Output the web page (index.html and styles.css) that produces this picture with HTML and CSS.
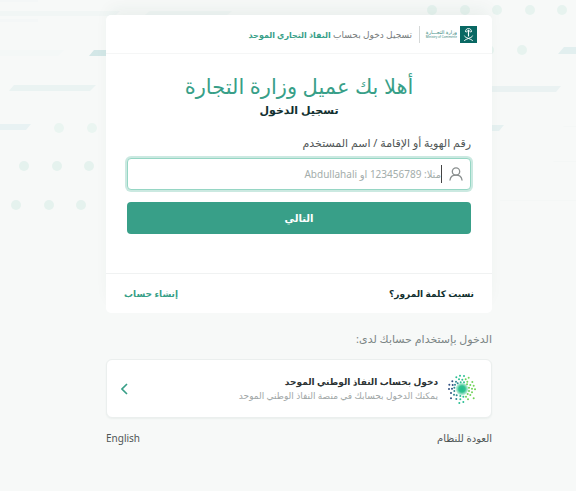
FILE: index.html
```html
<!DOCTYPE html>
<html lang="ar" dir="rtl">
<head>
    <meta charset="UTF-8">
    <meta name="viewport" content="width=device-width, initial-scale=1.0">
    <title>تسجيل الدخول</title>
    <link rel="stylesheet" href="styles.css">
</head>
<body>
    <svg class="pattern pattern-left" width="240" height="220" viewBox="0 0 240 220" aria-hidden="true">
        <path d="M0 11h120l-5 5H0z" fill="#f1f6f5"/>
        <path d="M150 11h82l-5 4h-82z" fill="#f1f6f5"/>
        <path d="M0 19h38v3H0zM0 0h38v2H0z" fill="#f4f7f7"/>
        <path d="M0 50h64l-6 6H0z" fill="#f4f8f7"/>
        <path d="M94 50h30v6H89z" fill="#d3e7e7"/>
        <path d="M14 85h82l-6 6H9z" fill="#eaf3f2"/>
        <path d="M0 124h31l-5 6H0z" fill="#e8f2f3"/>
        <g fill="#eaf5f1">
            <circle cx="59" cy="128" r="5"/>
            <circle cx="92" cy="128" r="5"/>
        </g>
        <g fill="#e5f2ee">
            <circle cx="24" cy="166" r="5"/>
            <circle cx="57" cy="166" r="5"/>
            <circle cx="89" cy="166" r="5"/>
            <circle cx="16" cy="205" r="5"/>
            <circle cx="49" cy="205" r="5"/>
            <circle cx="81" cy="205" r="5"/>
        </g>
    </svg>
    <svg class="pattern pattern-right" width="176" height="220" viewBox="0 0 176 220" aria-hidden="true">
        <g fill="#e7f3ef">
            <circle cx="32" cy="10" r="5"/>
            <circle cx="65" cy="10" r="5"/>
            <circle cx="97" cy="10" r="5"/>
            <circle cx="130" cy="10" r="5"/>
            <circle cx="162" cy="10" r="5"/>
            <circle cx="89" cy="50" r="5"/>
            <circle cx="122" cy="50" r="5"/>
        </g>
        <path d="M164 47h12v7h-18z" fill="#e2efef"/>
        <path d="M80 86h81l-5 6H80z" fill="#eaf2f2"/>
        <path d="M80 125h24l-5 6H80z" fill="#e6f1f1"/>
        <path d="M164 126h12v1h-13zM154 161h22v1h-23zM100 200h76v1h-76z" fill="#f4f7f6"/>
    </svg>

    <main class="page">
        <div class="card">
            <header class="card-header">
                <div class="brand">
                    <svg width="17" height="17" viewBox="0 0 34 34" aria-hidden="true">
                        <rect width="34" height="34" fill="#096863"/>
                        <g fill="none" stroke="#fff" stroke-linecap="round">
                            <path d="M17 8v12" stroke-width="2.4"/>
                            <path d="M11 11c0-4 3-6 6-6s6 2 6 6M13 12c1-4 7-4 8 0" stroke-width="2"/>
                            <path d="M9 20c1 4 12 5 16 9M25 20c-1 4-12 5-16 9" stroke-width="2"/>
                        </g>
                    </svg>
                    <div class="brand-text">
                        <span class="brand-ar">وزارة التجـــارة</span>
                        <span class="brand-en">Ministry of Commerce</span>
                    </div>
                </div>
                <p class="header-text">تسجيل دخول بحساب <b>النفاذ التجاري الموحد</b></p>
            </header>

            <form class="login">
                <h1>أهلا بك عميل وزارة التجارة</h1>
                <h2>تسجيل الدخول</h2>
                <label for="username">رقم الهوية أو الإقامة / اسم المستخدم</label>
                <div class="field">
                    <svg width="14" height="14" viewBox="0 0 14 14" fill="none" stroke="#8a8f8f" stroke-width="1.3" stroke-linecap="round" aria-hidden="true">
                        <circle cx="7" cy="4.5" r="3.7"/>
                        <path d="M1 13c.4-3 2.8-4.8 6-4.8s5.600 1.800 6 4.800"/>
                    </svg>
                    <span class="caret"></span>
                    <input type="text" id="username" placeholder="مثلا: 123456789 او Abdullahali">
                </div>
                <button type="submit" class="next">التالي</button>
            </form>

            <div class="card-footer">
                <a href="#" class="forgot">نسيت كلمة المرور؟</a>
                <a href="#" class="register">إنشاء حساب</a>
            </div>
        </div>

        <p class="other">الدخول بإستخدام حسابك لدى:</p>

        <a href="#" class="provider">
            <svg width="30" height="30" viewBox="0 0 90 90" aria-hidden="true">
                <defs>
                    <radialGradient id="core">
                        <stop offset="0" stop-color="#20bd8d"/>
                        <stop offset=".5" stop-color="#32c391"/>
                        <stop offset="1" stop-color="#5fd0a5" stop-opacity="0.3"/>
                    </radialGradient>
                </defs>
                <circle cx="45" cy="45" r="19" fill="url(#core)"/>
                <g fill="#2f4f80">
                    <circle cx="16" cy="22" r="3"/>
                    <circle cx="7" cy="32" r="3"/>
                    <circle cx="17" cy="33" r="3"/>
                    <circle cx="6" cy="45" r="3"/>
                    <circle cx="15" cy="44" r="3"/>
                    <circle cx="12" cy="57" r="3"/>
                    <circle cx="12" cy="73" r="3"/>
                </g>
                <g fill="#2f8a91">
                    <circle cx="27" cy="23" r="3"/>
                    <circle cx="24" cy="32" r="3"/>
                    <circle cx="22" cy="41" r="3"/>
                    <circle cx="22" cy="51" r="3"/>
                    <circle cx="21" cy="62" r="3"/>
                    <circle cx="29" cy="64" r="3"/>
                    <circle cx="28" cy="75" r="3"/>
                    <circle cx="32" cy="28" r="3"/>
                </g>
                <g fill="#2cbf94">
                    <circle cx="28" cy="10" r="3"/>
                    <circle cx="39" cy="5" r="3"/>
                    <circle cx="51" cy="6" r="3"/>
                    <circle cx="36" cy="16" r="3"/>
                    <circle cx="46" cy="17" r="3"/>
                    <circle cx="41" cy="25" r="3"/>
                    <circle cx="51" cy="25" r="3"/>
                    <circle cx="40" cy="66" r="3"/>
                    <circle cx="49" cy="68" r="3"/>
                    <circle cx="40" cy="76" r="3"/>
                    <circle cx="37" cy="87" r="3"/>
                    <circle cx="49" cy="84" r="3"/>
                </g>
                <g fill="#71d35a">
                    <circle cx="65" cy="11" r="3"/>
                    <circle cx="56" cy="16" r="3"/>
                    <circle cx="61" cy="23" r="3"/>
                    <circle cx="76" cy="24" r="3"/>
                    <circle cx="60" cy="31" r="3"/>
                    <circle cx="70" cy="33" r="3"/>
                    <circle cx="80" cy="35" r="3"/>
                    <circle cx="66" cy="41" r="3"/>
                    <circle cx="75" cy="44" r="3"/>
                    <circle cx="84" cy="46" r="3"/>
                    <circle cx="66" cy="51" r="3"/>
                    <circle cx="75" cy="55" r="3"/>
                    <circle cx="62" cy="60" r="3"/>
                    <circle cx="70" cy="63" r="3"/>
                    <circle cx="80" cy="73" r="3"/>
                    <circle cx="57" cy="68" r="3"/>
                    <circle cx="63" cy="76" r="3"/>
                </g>
            </svg>
            <span class="provider-text">
                <strong>دخول بحساب النفاذ الوطني الموحد</strong>
                <small>يمكنك الدخول بحسابك في منصة النفاذ الوطني الموحد</small>
            </span>
            <svg class="arrow" width="7" height="12" viewBox="0 0 7 12" fill="none" stroke="#389f88" stroke-width="1.6" aria-hidden="true">
                <path d="M6 1L1 6l5 5"/>
            </svg>
        </a>

        <div class="bottom">
            <a href="#">العودة للنظام</a>
            <a href="#" lang="en">English</a>
        </div>
    </main>
</body>
</html>
```

FILE: styles.css
```css
* {
    box-sizing: border-box;
}

body {
    position: relative;
    margin: 0;
    background-color: #f7f9f8;
    font-family: "Noto Sans", "DejaVu Sans", sans-serif;
    font-size: 10px;
    color: #4f5656;
}

a {
    color: inherit;
    text-decoration: none;
}

p, h1, h2 {
    margin: 0;
}

/* background shapes */
.pattern {
    position: absolute;
    top: 0;
}

.pattern-left {
    left: 0;
}

.pattern-right {
    right: 0;
}

.page {
    position: relative;
    padding: 15px 84px 40px 106px;
}

.card {
    background-color: #fff;
    border-radius: 5px;
    box-shadow: 0 -10px 16px -4px rgba(40, 80, 70, 0.06);
}

.card-header {
    display: flex;
    align-items: center;
    height: 39px;
    padding: 0 15px;
    border-bottom: 1px solid #f5f6f6;
}

.brand {
    display: flex;
    align-items: center;
    gap: 3px;
    padding-left: 7px;
    margin-left: 7px;
    border-left: 1px solid #d5d8d8;
}

.brand-text {
    display: flex;
    flex-direction: column;
    width: 30px;
    color: #2c7f79;
    white-space: nowrap;
}

.brand-ar {
    font-size: 5px;
    line-height: 6px;
}

.brand-en {
    font-size: 3px;
    line-height: 4px;
}

.header-text {
    font-size: 9px;
    color: #777d7d;
    white-space: nowrap;
}

.header-text b {
    font-size: 8px;
    color: #389f88;
}

.login {
    display: flex;
    flex-direction: column;
    padding: 16px 21px 39px;
}

h1 {
    font-size: 21px;
    font-weight: normal;
    line-height: 32px;
    text-align: center;
    white-space: nowrap;
    color: #389f88;
}

h2 {
    font-size: 11px;
    line-height: 16px;
    text-align: center;
    color: #12302f;
}

label {
    margin: 17px 0 7px;
    font-size: 11px;
    line-height: 16px;
}

.field {
    display: flex;
    align-items: center;
    height: 32px;
    padding: 0 7px;
    background-color: #fff;
    border: 1px solid #96d6c4;
    border-radius: 4px;
    box-shadow: 0 0 0 2px #cbe9e1;
}

.caret {
    width: 1px;
    height: 18px;
    margin-right: 7px;
    background-color: #444;
}

.field input {
    flex: 1;
    min-width: 0;
    padding: 0;
    border: none;
    outline: none;
    background: none;
    font-family: inherit;
    font-size: 10px;
    color: #333;
}

.field input::placeholder {
    color: #a3adab;
    opacity: 1;
}

.next {
    height: 32px;
    margin-top: 12px;
    border: none;
    border-radius: 4px;
    background-color: #389f88;
    font-family: inherit;
    font-size: 10px;
    font-weight: bold;
    color: #fff;
    cursor: pointer;
}

.card-footer {
    display: flex;
    align-items: center;
    justify-content: space-between;
    height: 40px;
    padding: 0 18px;
    border-top: 1px solid #f0f2f2;
    font-size: 9px;
    font-weight: bold;
}

.forgot {
    color: #12302f;
}

.register {
    color: #389f88;
}

.other {
    margin: 18px 0 12px;
    font-size: 11px;
    line-height: 16px;
    color: #7b8585;
}

.provider {
    display: flex;
    align-items: center;
    gap: 9px;
    height: 59px;
    padding: 0 14px;
    background-color: #fff;
    border: 1px solid #ebefee;
    border-radius: 6px;
    box-shadow: 0 1px 2px rgba(40, 80, 70, 0.06);
}

.provider-text {
    display: flex;
    flex: 1;
    flex-direction: column;
    white-space: nowrap;
}

.provider-text strong {
    font-size: 9px;
    line-height: 14px;
    color: #2c3333;
}

.provider-text small {
    font-size: 9px;
    line-height: 13px;
    color: #a0a6a6;
}

.bottom {
    display: flex;
    justify-content: space-between;
    margin-top: 12px;
    font-size: 10px;
    line-height: 16px;
}
```
